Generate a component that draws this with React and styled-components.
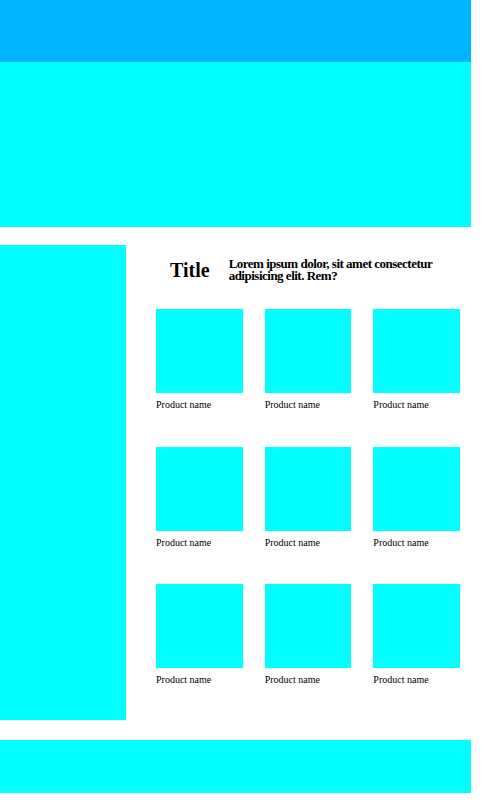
import React from "react";
import styled, { createGlobalStyle } from "styled-components";

const GlobalStyle = createGlobalStyle`
  body {
    margin: 0;
    background: #fff;
    font-family: "Liberation Serif", "Times New Roman", serif;
    color: #000;
  }
`;

const Page = styled.div`
  width: 471px;
  display: flex;
  flex-direction: column;
`;

const Header = styled.header`
  height: 62px;
  background: #00b4ff;
`;

const Hero = styled.section`
  height: 165px;
  background: #00ffff;
  margin-bottom: 18px;
`;

const Body = styled.div`
  display: flex;
  height: 475px;
  margin-bottom: 20px;
`;

const Sidebar = styled.aside`
  width: 126px;
  flex-shrink: 0;
  background: #00ffff;
`;

const Main = styled.main`
  flex: 1;
  padding: 13px 11px 0 30px;
`;

const Intro = styled.div`
  display: flex;
  align-items: center;
  padding-left: 14px;
  gap: 19px;
`;

const Title = styled.h2`
  margin: 0;
  font-size: 20px;
  font-weight: bold;
`;

const Lead = styled.p`
  margin: 0;
  font-size: 13px;
  line-height: 12px;
  letter-spacing: -0.5px;
  font-weight: bold;
`;

const Grid = styled.div`
  display: grid;
  grid-template-columns: repeat(3, 1fr);
  column-gap: 22px;
  row-gap: 35.5px;
  margin-top: 27px;
`;

const Card = styled.div`
  display: flex;
  flex-direction: column;
`;

const Thumb = styled.div`
  height: 84px;
  background: #00ffff;
`;

const Name = styled.span`
  margin-top: 6px;
  font-size: 10px;
  line-height: 12px;
`;

const Footer = styled.footer`
  height: 53px;
  background: #00ffff;
`;

const products = Array.from({ length: 9 }, (_, i) => ({ id: i, name: "Product name" }));

export default function App() {
  return (
    <>
      <GlobalStyle />
      <Page>
        <Header />
        <Hero />
        <Body>
          <Sidebar />
          <Main>
            <Intro>
              <Title>Title</Title>
              <Lead>Lorem ipsum dolor, sit amet consectetur adipisicing elit. Rem?</Lead>
            </Intro>
            <Grid>
              {products.map((p) => (
                <Card key={p.id}>
                  <Thumb />
                  <Name>{p.name}</Name>
                </Card>
              ))}
            </Grid>
          </Main>
        </Body>
        <Footer />
      </Page>
    </>
  );
}
